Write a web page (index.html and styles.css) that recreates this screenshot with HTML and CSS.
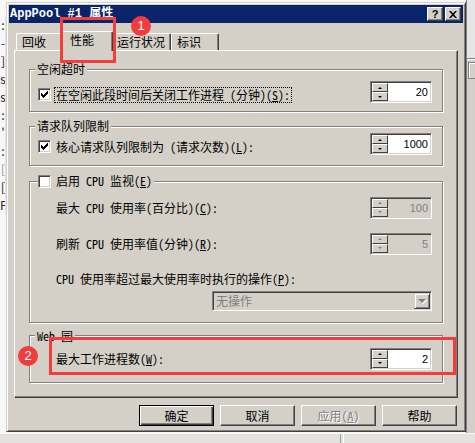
FILE: index.html
```html
<!DOCTYPE html>
<html lang="zh-CN">

<head>
    <meta charset="UTF-8">
    <title>AppPool #1 属性</title>
    <link rel="stylesheet" href="styles.css">
</head>

<body>
    <div class="desk">
        <!-- windows behind the dialog -->
        <div class="bg-left">
            <div>:</div>
            <div class="blue">-</div>
            <div>]</div>
            <div>s</div>
            <div>s</div>
            <div>:</div>
            <div>'</div>
            <div>:</div>
            <div class="grey">[</div>
            <div>[</div>
            <div>F</div>
        </div>
        <div class="bg-right">
            <div class="bg-right-top"></div>
            <div class="bg-right-box"></div>
        </div>
        <div class="bg-bottom"></div>

        <div class="dlg">
            <div class="titlebar">
                <span class="title">AppPool #1 属性</span>
                <div class="tbtns">
                    <span class="tbtn help">?</span>
                    <span class="tbtn">
                        <svg width="8" height="7" viewBox="0 0 8 7">
                            <path d="M0 0h2l2 2.2L6 0h2L5 3.5 8 7H6L4 4.8 2 7H0l3-3.5z" fill="#000" />
                        </svg>
                    </span>
                </div>
            </div>

            <div class="dlg-body">
                <div class="tabs">
                    <div class="tab t1">回收</div>
                    <div class="tab t2 sel">性能</div>
                    <div class="tab t3">运行状况</div>
                    <div class="tab t4">标识</div>
                </div>

                <div class="panel">
                    <fieldset class="grp g1">
                        <legend>空闲超时</legend>
                        <div class="row">
                            <span class="chk">
                                <span class="box on"><svg width="7" height="7" viewBox="0 0 7 7"><path d="M0 2H1V3H2V4H3V3H4V2H5V1H6V0H7V3H6V4H5V5H4V6H3V7H2V6H1V5H0Z" /></svg></span>
                                <span class="focus">在空闲此段时间后关闭工作进程 (分钟)(<u>S</u>):</span>
                            </span>
                            <div class="spin">
                                <div class="sbtns"><span class="sb up"></span><span class="sb dn"></span></div>
                                <div class="sval">20</div>
                            </div>
                        </div>
                    </fieldset>

                    <fieldset class="grp g2">
                        <legend>请求队列限制</legend>
                        <div class="row">
                            <span class="chk">
                                <span class="box on"><svg width="7" height="7" viewBox="0 0 7 7"><path d="M0 2H1V3H2V4H3V3H4V2H5V1H6V0H7V3H6V4H5V5H4V6H3V7H2V6H1V5H0Z" /></svg></span>
                                <span class="txt">核心请求队列限制为 (请求次数)(<u>L</u>):</span>
                            </span>
                            <div class="spin">
                                <div class="sbtns"><span class="sb up"></span><span class="sb dn"></span></div>
                                <div class="sval">1000</div>
                            </div>
                        </div>
                    </fieldset>

                    <fieldset class="grp g3">
                        <legend class="chk-legend">
                            <span class="chk">
                                <span class="box"></span>
                                <span class="txt">启用 CPU 监视(<u>E</u>)</span>
                            </span>
                        </legend>
                        <div class="row">
                            <span class="lbl">最大 CPU 使用率(百分比)(<u>C</u>):</span>
                            <div class="spin off">
                                <div class="sbtns"><span class="sb up"></span><span class="sb dn"></span></div>
                                <div class="sval">100</div>
                            </div>
                        </div>
                        <div class="row r2">
                            <span class="lbl">刷新 CPU 使用率值(分钟)(<u>R</u>):</span>
                            <div class="spin off">
                                <div class="sbtns"><span class="sb up"></span><span class="sb dn"></span></div>
                                <div class="sval">5</div>
                            </div>
                        </div>
                        <div class="row r3">
                            <span class="lbl">CPU 使用率超过最大使用率时执行的操作(<u>P</u>):</span>
                        </div>
                        <div class="row r4">
                            <div class="combo">
                                <span class="cval">无操作</span>
                                <span class="cbtn"><span class="carrow"></span></span>
                            </div>
                        </div>
                    </fieldset>

                    <fieldset class="grp g4">
                        <legend>Web 园</legend>
                        <div class="row">
                            <span class="lbl">最大工作进程数(<u>W</u>):</span>
                            <div class="spin">
                                <div class="sbtns"><span class="sb up"></span><span class="sb dn"></span></div>
                                <div class="sval">2</div>
                            </div>
                        </div>
                    </fieldset>
                </div>

                <div class="btns">
                    <span class="btn def">确定</span>
                    <span class="btn">取消</span>
                    <span class="btn off">应用(<u>A</u>)</span>
                    <span class="btn">帮助</span>
                </div>
            </div>
        </div>

        <!-- annotations -->
        <div class="mark m1"></div>
        <div class="mark m2"></div>
        <div class="badge b1">1</div>
        <div class="badge b2">2</div>
    </div>
</body>

</html>
```

FILE: styles.css
```css
body {
    margin: 0;
    background: #f7f7f7;
    font-family: "Noto Sans CJK SC", sans-serif;
    font-feature-settings: "hwid";
    font-size: 12px;
    color: #000;
}

.desk {
    position: relative;
    width: 475px;
    height: 443px;
    overflow: hidden;
    padding: 2px 0 0 6px;
    box-sizing: border-box;
}

/* behind the dialog */
.bg-left {
    position: absolute;
    left: 0;
    top: 16px;
    width: 5px;
    overflow: hidden;
    line-height: 18px;
    color: #222;
    text-align: right;
    border-right: 1px solid #e2e2e2;
}

.bg-left .blue {
    color: #3050a0;
}

.bg-left .grey {
    color: #999;
}

.bg-right {
    position: absolute;
    left: 466px;
    top: 0;
    width: 9px;
    height: 443px;
    background: #d4d0c8;
    border-left: 1px solid #808080;
}

.bg-right-top {
    height: 58px;
    background: #e6e6e6;
    border-bottom: 1px solid #808080;
    box-shadow: 0 1px #fff;
}

.bg-right-box {
    margin: 3px 0 0 1px;
    height: 15px;
    border: 1px solid #808080;
    border-right: 0;
    box-shadow: inset 1px 1px #fff;
}

.bg-bottom {
    position: absolute;
    left: 0;
    top: 433px;
    width: 475px;
    height: 10px;
    background: linear-gradient(90deg, transparent 340px, #a0a0a0 340px, #a0a0a0 341px, transparent 341px, transparent 343px, #fff 343px, #fff 344px, transparent 344px), #e4e2de;
    border-top: 1px solid #fafafa;
}

/* dialog frame */
.dlg {
    position: relative;
    width: 460px;
    height: 430px;
    box-sizing: border-box;
    background: #d4d0c8;
    border: 1px solid;
    border-color: #d4d0c8 #404040 #404040 #d4d0c8;
    box-shadow: inset 1px 1px #fff, inset -1px -1px #808080;
    padding: 2px;
}

.titlebar {
    height: 18px;
    background: #0a246a;
    display: flex;
    align-items: center;
    justify-content: space-between;
    padding: 0 2px 0 1px;
}

.title {
    color: #fff;
    font-family: "Liberation Mono", "Noto Sans CJK SC", monospace;
    font-feature-settings: normal;
    font-weight: bold;
    font-size: 12px;
    line-height: 14px;
}

.tbtns {
    display: flex;
    gap: 2px;
}

.tbtn {
    width: 16px;
    height: 14px;
    box-sizing: border-box;
    background: #d4d0c8;
    border: 1px solid;
    border-color: #fff #404040 #404040 #fff;
    box-shadow: inset -1px -1px #808080;
    display: flex;
    align-items: center;
    justify-content: center;
}

.tbtn.help {
    font-family: "Liberation Sans", sans-serif;
    font-weight: bold;
    font-size: 11px;
    line-height: 12px;
}

.dlg-body {
    padding: 8px 5px 0;
}

/* tabs */
.tabs {
    display: flex;
    align-items: flex-end;
    height: 19px;
    padding-left: 2px;
    position: relative;
    z-index: 1;
}

.tab {
    height: 17px;
    box-sizing: border-box;
    background: #d4d0c8;
    border: 1px solid;
    border-bottom: 0;
    border-color: #fff #404040 #fff #fff;
    box-shadow: inset -1px 0 #808080;
    border-radius: 2px 2px 0 0;
    padding: 1px 0 0 5px;
    line-height: 14px;
}

.t1 { width: 47px; }
.t2 { width: 48px; }
.t3 { width: 60px; }
.t4 { width: 48px; }

.tab.sel {
    width: 52px;
    height: 20px;
    margin: 0 -2px -1px;
    padding-left: 8px;
    position: relative;
    z-index: 1;
}

/* tab page */
.panel {
    border: 1px solid;
    border-color: #fff #404040 #404040 #fff;
    box-shadow: inset -1px -1px #808080;
    padding: 12px 14px 14px;
}

.grp {
    margin: 0;
    padding: 0 10px 0 0;
    min-width: 0;
    border: 1px solid #808080;
    box-shadow: inset 1px 1px #fff, 1px 1px #fff;
}

.grp legend {
    margin-left: 5px;
    padding: 0 2px;
    line-height: 12px;
    background: #d4d0c8;
}

.grp legend.chk-legend {
    margin-left: 8px;
    padding: 0 2px 0 0;
    line-height: 13px;
}

.g1 { padding-top: 6px; padding-bottom: 8px; }
.g2 { margin-top: 8px; padding-top: 1px; padding-bottom: 10px; }
.g3 { margin-top: 8px; padding-top: 8px; padding-bottom: 11px; }
.g4 { margin-top: 7px; padding-top: 6px; padding-bottom: 12px; }

.row {
    display: flex;
    align-items: center;
    justify-content: space-between;
    padding-left: 8px;
}

.r2 { margin-top: 14px; }
.r3 { margin-top: 17px; line-height: 14px; }
.r4 { margin-top: 5px; justify-content: flex-end; }

.lbl {
    padding-left: 18px;
}

.chk {
    display: inline-flex;
    align-items: center;
    gap: 5px;
}

.row .chk {
    margin-top: 5px;
}

.box {
    width: 13px;
    height: 13px;
    box-sizing: border-box;
    background: #fff;
    border: 1px solid;
    border-color: #808080 #fff #fff #808080;
    box-shadow: inset 1px 1px #404040, inset -1px -1px #d4d0c8;
    display: flex;
    align-items: center;
    justify-content: center;
}

.box svg {
    display: block;
}

.focus {
    outline: 1px dotted #000;
    padding: 0 1px;
    margin-left: -1px;
    line-height: 14px;
}

.txt {
    line-height: 14px;
}

/* spinners */
.spin {
    width: 62px;
    height: 22px;
    box-sizing: border-box;
    display: flex;
    background: #fff;
    border: 1px solid;
    border-color: #808080 #fff #fff #808080;
    box-shadow: inset 1px 1px #404040, inset -1px -1px #d4d0c8;
    padding: 1px;
}

.sbtns {
    width: 16px;
    display: flex;
    flex-direction: column;
}

.sb {
    flex: 1;
    box-sizing: border-box;
    background: #d4d0c8;
    border: 1px solid;
    border-color: #fff #404040 #404040 #fff;
    display: flex;
    align-items: center;
    justify-content: center;
}

.sb::after {
    content: "";
    border-left: 2px solid transparent;
    border-right: 2px solid transparent;
}

.sb.up::after {
    border-bottom: 2px solid #000;
}

.sb.dn::after {
    border-top: 2px solid #000;
}

.sval {
    flex: 1;
    text-align: right;
    padding-right: 2px;
    font-family: "Liberation Sans", sans-serif;
    font-size: 11px;
    line-height: 18px;
}

.spin.off {
    background: #d4d0c8;
}

.spin.off .sval {
    color: #808080;
}

.spin.off .sb.up::after {
    border-bottom-color: #808080;
}

.spin.off .sb.dn::after {
    border-top-color: #808080;
}

/* combo */
.combo {
    width: 220px;
    height: 20px;
    box-sizing: border-box;
    display: flex;
    align-items: center;
    justify-content: space-between;
    background: #d4d0c8;
    border: 1px solid;
    border-color: #808080 #fff #fff #808080;
    box-shadow: inset 1px 1px #404040, inset -1px -1px #d4d0c8;
    padding: 1px;
}

.cval {
    padding-left: 2px;
    color: #808080;
    line-height: 16px;
}

.cbtn {
    width: 16px;
    height: 16px;
    box-sizing: border-box;
    border: 1px solid;
    border-color: #d4d0c8 #404040 #404040 #d4d0c8;
    box-shadow: inset 1px 1px #fff, inset -1px -1px #808080;
    display: flex;
    align-items: center;
    justify-content: center;
}

.carrow {
    border-left: 4px solid transparent;
    border-right: 4px solid transparent;
    border-top: 4px solid #808080;
    filter: drop-shadow(1px 1px 0 #fff);
}

/* dialog buttons */
.btns {
    display: flex;
    justify-content: flex-end;
    gap: 6px;
    margin-top: 7px;
    padding-right: 1px;
}

.btn {
    width: 75px;
    height: 21px;
    box-sizing: border-box;
    border: 1px solid;
    border-color: #fff #404040 #404040 #fff;
    box-shadow: inset -1px -1px #808080;
    text-align: center;
    line-height: 19px;
}

.btn.def {
    border-color: #000;
    box-shadow: inset 1px 1px #fff, inset -1px -1px #404040, inset -2px -2px #808080;
}

.btn.off {
    color: #808080;
    text-shadow: 1px 1px 0 #fff;
}

/* annotations */
.mark {
    position: absolute;
    box-sizing: border-box;
    border: 3px solid #f33c3c;
    z-index: 2;
}

.m1 {
    left: 60px;
    top: 17px;
    width: 56px;
    height: 46px;
}

.m2 {
    left: 49px;
    top: 337px;
    width: 407px;
    height: 38px;
}

.badge {
    position: absolute;
    z-index: 3;
    width: 20px;
    height: 20px;
    border-radius: 50%;
    background: #f03c3c;
    color: #fff;
    font-family: "Liberation Sans", sans-serif;
    font-size: 13px;
    line-height: 20px;
    text-align: center;
}

.b1 {
    left: 131px;
    top: 16px;
}

.b2 {
    left: 18px;
    top: 346px;
}
```
